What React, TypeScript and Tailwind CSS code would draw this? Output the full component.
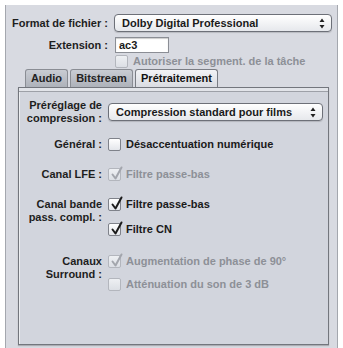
import React from "react";

function Check({ checked = false, disabled = false }: { checked?: boolean; disabled?: boolean }) {
  return (
    <div
      className={
        "relative shrink-0 w-[13px] h-[13px] rounded-[2px] border " +
        (disabled
          ? "border-[#b3b6bd] bg-linear-to-b from-[#eef0f3] to-[#dcdfe5]"
          : "border-[#7f828a] bg-linear-to-b from-white to-[#e4e6eb]")
      }
    >
      {checked && (
        <svg
          className="absolute left-[1px] top-[-3px]"
          width="14"
          height="15"
          viewBox="0 0 14 15"
        >
          <path
            d="M2.5 8.5 L5.5 12.5 L11.5 1.5"
            fill="none"
            stroke={disabled ? "#a3a6ad" : "#1c1c1c"}
            strokeWidth="2"
            strokeLinecap="round"
            strokeLinejoin="round"
          />
        </svg>
      )}
    </div>
  );
}

function Arrows() {
  return (
    <svg width="6" height="11" viewBox="0 0 6 11" className="shrink-0">
      <path d="M0.5 4 L3 0.5 L5.5 4 Z" fill="#222" />
      <path d="M0.5 7 L3 10.5 L5.5 7 Z" fill="#222" />
    </svg>
  );
}

function Popup({ text, w }: { text: string; w: string }) {
  return (
    <div
      className={
        "flex items-center h-[18px] rounded-[4px] border border-[#6d7078] bg-linear-to-b from-white to-[#e6e8ec] shadow-[0_1px_1px_rgba(0,0,0,0.15)] pl-[7px] pr-[6px] " +
        w
      }
    >
      <span className="text-[#1a1a1a]">{text}</span>
      <div className="ml-auto">
        <Arrows />
      </div>
    </div>
  );
}

function Tab({ label, w, selected = false }: { label: string; w: string; selected?: boolean }) {
  return (
    <div
      className={
        "flex items-center justify-center h-[18px] rounded-t-[3px] border border-b-0 " +
        w +
        (selected
          ? " border-[#7a7d84] bg-linear-to-b from-[#f2f3f6] to-[#dadce2] text-[#111]"
          : " border-[#8a8d94] bg-linear-to-b from-[#c9ccd3] to-[#aeb2ba] text-[#222]")
      }
    >
      {label}
    </div>
  );
}

export default function App() {
  return (
    <div className="w-[343px] h-[348px] bg-white pt-[5px] pl-[5px] font-['Liberation_Sans',Arial,sans-serif] text-[11px] font-bold leading-[13px]">
      <div className="w-[333px] h-[343px] bg-[#d8dae1] border-l border-r border-[#a4a7ae] pt-[9px] flex flex-col">
        {/* Format */}
        <div className="flex items-center">
          <div className="w-[102px] text-right text-[#1e1e1e]">Format de fichier :</div>
          <div className="ml-[6px]">
            <Popup text="Dolby Digital Professional" w="w-[218px]" />
          </div>
        </div>
        {/* Extension */}
        <div className="flex items-center mt-[5px]">
          <div className="w-[102px] text-right text-[#1e1e1e]">Extension :</div>
          <div className="ml-[7px] w-[54px] h-[16px] bg-white border border-[#8b8e95] shadow-[inset_0_1px_1px_rgba(0,0,0,0.2)] flex items-center pl-[3px] text-[#1a1a1a]">
            ac3
          </div>
        </div>
        {/* Autoriser */}
        <div className="flex items-center mt-[2px] ml-[109px]">
          <Check disabled />
          <span className="ml-[5px] text-[#8d9097]">Autoriser la segment. de la tâche</span>
        </div>
        {/* Tabs */}
        <div className="flex items-end mt-[1px] ml-[19px] gap-[2px]">
          <Tab label="Audio" w="w-[43px]" />
          <Tab label="Bitstream" w="w-[63px]" />
          <Tab label="Prétraitement" w="w-[83px]" selected />
        </div>
        {/* Panel */}
        <div className="ml-[12px] w-[311px] h-[258px] bg-[#d2d5dd] border border-[#73767d] shadow-[inset_0_3px_0_#e2e4e9,inset_0_4px_0_#9da0a7,inset_1px_0_0_#eceef1,0_1px_1px_rgba(0,0,0,0.2)] flex flex-col pt-[11px]">
          {/* Preset */}
          <div className="flex items-center">
            <div className="w-[83px] text-right text-[#1e1e1e] leading-[13px]">
              Préréglage de
              <br />
              compression :
            </div>
            <div className="ml-[6px]">
              <Popup text="Compression standard pour films" w="w-[215px]" />
            </div>
          </div>
          {/* Général */}
          <div className="flex items-center mt-[13px]">
            <div className="w-[83px] text-right text-[#1e1e1e]">Général :</div>
            <div className="ml-[6px] flex items-center">
              <Check />
              <span className="ml-[5px] text-[#1a1a1a]">Désaccentuation numérique</span>
            </div>
          </div>
          {/* LFE */}
          <div className="flex items-center mt-[17px]">
            <div className="w-[83px] text-right text-[#1e1e1e]">Canal LFE :</div>
            <div className="ml-[6px] flex items-center">
              <Check checked disabled />
              <span className="ml-[5px] text-[#8d9097]">Filtre passe-bas</span>
            </div>
          </div>
          {/* Canal bande */}
          <div className="flex items-start mt-[17px]">
            <div className="w-[83px] text-right text-[#1e1e1e] leading-[13px]">
              Canal bande
              <br />
              pass. compl. :
            </div>
            <div className="ml-[6px] flex flex-col gap-[12px]">
              <div className="flex items-center h-[13px]">
                <Check checked />
                <span className="ml-[5px] text-[#1a1a1a]">Filtre passe-bas</span>
              </div>
              <div className="flex items-center h-[13px]">
                <Check checked />
                <span className="ml-[5px] text-[#1a1a1a]">Filtre CN</span>
              </div>
            </div>
          </div>
          {/* Canaux Surround */}
          <div className="flex items-start mt-[19px]">
            <div className="w-[83px] text-right text-[#1e1e1e] leading-[13px]">
              Canaux
              <br />
              Surround :
            </div>
            <div className="ml-[6px] flex flex-col gap-[10px]">
              <div className="flex items-center h-[13px]">
                <Check checked disabled />
                <span className="ml-[5px] text-[#8d9097]">Augmentation de phase de 90°</span>
              </div>
              <div className="flex items-center h-[13px]">
                <Check disabled />
                <span className="ml-[5px] text-[#8d9097]">Atténuation du son de 3 dB</span>
              </div>
            </div>
          </div>
        </div>
      </div>
    </div>
  );
}
